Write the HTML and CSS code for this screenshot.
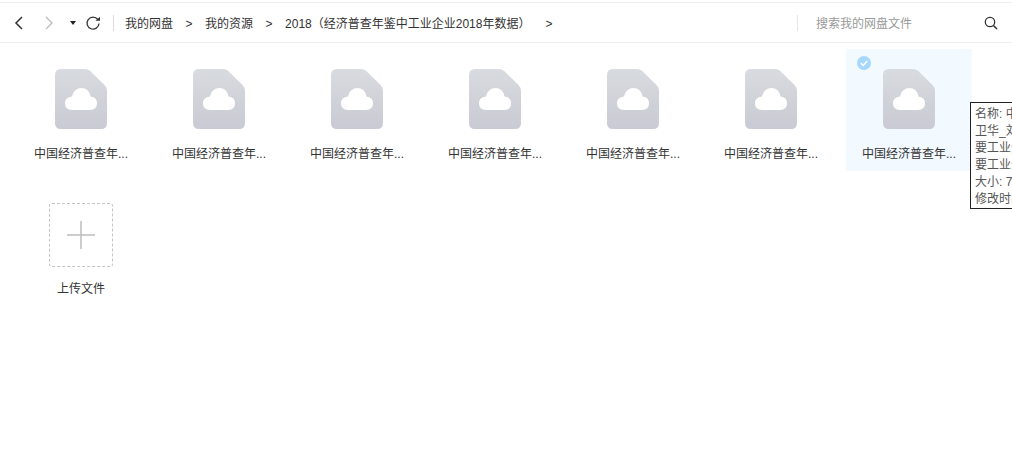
FILE: index.html
```html
<!DOCTYPE html>
<html lang="zh-CN">
<head>
    <meta charset="UTF-8">
    <title>我的网盘</title>
    <link rel="stylesheet" href="styles.css">
</head>
<body>

<svg class="defs" width="0" height="0">
    <defs>
        <linearGradient id="fileGrad" x1="0" y1="0" x2="0" y2="1">
            <stop offset="0" stop-color="#d8dbdf"/>
            <stop offset="1" stop-color="#c9cad3"/>
        </linearGradient>
        <symbol id="fileIcon" viewBox="0 0 52 60">
            <path d="M6 0H30Q33 0 35.500 2.300L49.500 16Q52 18.500 52 22V54Q52 60 46 60H6Q0 60 0 54V6Q0 0 6 0Z" fill="url(#fileGrad)"/>
            <path d="M17 41Q10 41 10 34.500Q10 28 17 27.500Q19 19 26.500 19Q34 19 35.500 27.500Q42 28 42 34.500Q42 41 35 41Z" fill="#fff"/>
        </symbol>
    </defs>
</svg>

<header class="toolbar">
    <div class="nav">
        <svg class="nav-icon" width="12" height="16" viewBox="0 0 12 16"><path d="M9 2L3 8L9 14" fill="none" stroke="#333" stroke-width="1.500"/></svg>
        <svg class="nav-icon forward" width="12" height="16" viewBox="0 0 12 16"><path d="M3 2L9 8L3 14" fill="none" stroke="#bbb" stroke-width="1.300"/></svg>
        <span class="caret"></span>
        <svg class="refresh" width="16" height="16" viewBox="0 0 16 16"><path d="M12.800 4.500A6 6 0 1 0 14 8.500" fill="none" stroke="#333" stroke-width="1.300"/><path d="M10.500 5.800H15V1.800Z" fill="#333"/></svg>
    </div>
    <nav class="crumbs">
        <span>我的网盘</span><span class="sep">&gt;</span>
        <span>我的资源</span><span class="sep">&gt;</span>
        <span>2018（经济普查年鉴中工业企业2018年数据）</span><span class="sep last">&gt;</span>
    </nav>
    <div class="search">
        <span class="search-text">搜索我的网盘文件</span>
        <svg width="14" height="14" viewBox="0 0 14 14"><circle cx="6" cy="6" r="4.700" fill="none" stroke="#333" stroke-width="1.300"/><path d="M9.500 9.500L13 13" stroke="#333" stroke-width="1.500"/></svg>
    </div>
</header>

<main class="files">
    <div class="file"><svg class="file-icon"><use href="#fileIcon"/></svg><p class="name">中国经济普查年...</p></div>
    <div class="file"><svg class="file-icon"><use href="#fileIcon"/></svg><p class="name">中国经济普查年...</p></div>
    <div class="file"><svg class="file-icon"><use href="#fileIcon"/></svg><p class="name">中国经济普查年...</p></div>
    <div class="file"><svg class="file-icon"><use href="#fileIcon"/></svg><p class="name">中国经济普查年...</p></div>
    <div class="file"><svg class="file-icon"><use href="#fileIcon"/></svg><p class="name">中国经济普查年...</p></div>
    <div class="file"><svg class="file-icon"><use href="#fileIcon"/></svg><p class="name">中国经济普查年...</p></div>
    <div class="file selected">
        <svg class="check" width="14" height="14" viewBox="0 0 14 14"><circle cx="7" cy="7" r="7" fill="#a6d8fd"/><path d="M3.800 7L6.200 9.400L10.300 5" fill="none" stroke="#fff" stroke-width="1.500"/></svg>
        <svg class="file-icon"><use href="#fileIcon"/></svg>
        <p class="name">中国经济普查年...</p>
    </div>
    <div class="upload">
        <div class="upload-box">
            <svg width="28" height="28" viewBox="0 0 28 28"><path d="M14 0V28M0 14H28" stroke="#bdbdbd" stroke-width="1.500"/></svg>
        </div>
        <p class="upload-name">上传文件</p>
    </div>
</main>

<div class="tip">
    名称: 中国经济普查年鉴<br>
    卫华_刘工业企业数据<br>
    要工业企业主要指标<br>
    要工业企业经济指标<br>
    大小: 72.5KB<br>
    修改时间: 2021-03-12
</div>

</body>
</html>
```

FILE: styles.css
```css
html, body {
    height: 100%;
}
body {
    margin: 0;
    overflow: hidden;
    position: relative;
    background: #fff;
    color: #333;
    font-family: "Liberation Sans", "Noto Sans CJK SC", sans-serif;
    font-size: 12px;
}
.defs {
    position: absolute;
}
.toolbar {
    display: flex;
    align-items: center;
    height: 39px;
    margin-top: 2px;
    border-top: 1px solid #eee;
    border-bottom: 1px solid #eee;
}
.nav {
    display: flex;
    align-items: center;
    width: 114px;
    height: 16px;
    padding-left: 13px;
    box-sizing: border-box;
    border-right: 1px solid #ddd;
}
.nav-icon, .refresh, .caret {
    flex: none;
}
.forward {
    margin-left: 18px;
}
.caret {
    margin-left: 15px;
    border-left: 3px solid transparent;
    border-right: 3px solid transparent;
    border-top: 4px solid #222;
}
.refresh {
    margin-left: 9px;
}
.crumbs {
    display: flex;
    flex: 1;
    align-items: baseline;
    padding-left: 11px;
    color: #333;
}
.sep {
    margin: 0 12.500px;
}
.last {
    margin-left: 15px;
}
.search {
    display: flex;
    align-items: center;
    justify-content: space-between;
    width: 201px;
    height: 16px;
    margin-right: 14px;
    padding-left: 18px;
    box-sizing: border-box;
    border-left: 1px solid #e6e6e6;
}
.search-text {
    color: #999;
}
.files {
    display: flex;
    flex-wrap: wrap;
    gap: 32px 12px;
    padding: 6px 0 0 18px;
}
.file {
    position: relative;
    display: flex;
    flex-direction: column;
    align-items: center;
    width: 126px;
    height: 122px;
    padding-top: 20px;
    box-sizing: border-box;
}
.file-icon {
    width: 52px;
    height: 60px;
}
.name, .upload-name {
    margin: 18px 0 0;
    line-height: 14px;
    text-align: center;
}
.selected {
    background: #f2f9ff;
}
.check {
    position: absolute;
    left: 11px;
    top: 7px;
}
.upload {
    width: 126px;
    margin-right: 900px;
}
.upload-box {
    display: flex;
    align-items: center;
    justify-content: center;
    width: 64px;
    height: 64px;
    margin-left: 31px;
    box-sizing: border-box;
    border: 1px dashed #c4c4c4;
    border-radius: 3px;
}
.upload-name {
    width: 126px;
    margin-top: 15px;
}
.tip {
    position: absolute;
    left: 970px;
    top: 102px;
    width: 200px;
    padding: 3px 4px 0;
    background: #fff;
    border: 1px solid #222;
    color: #555;
    line-height: 17px;
    white-space: nowrap;
}
```
